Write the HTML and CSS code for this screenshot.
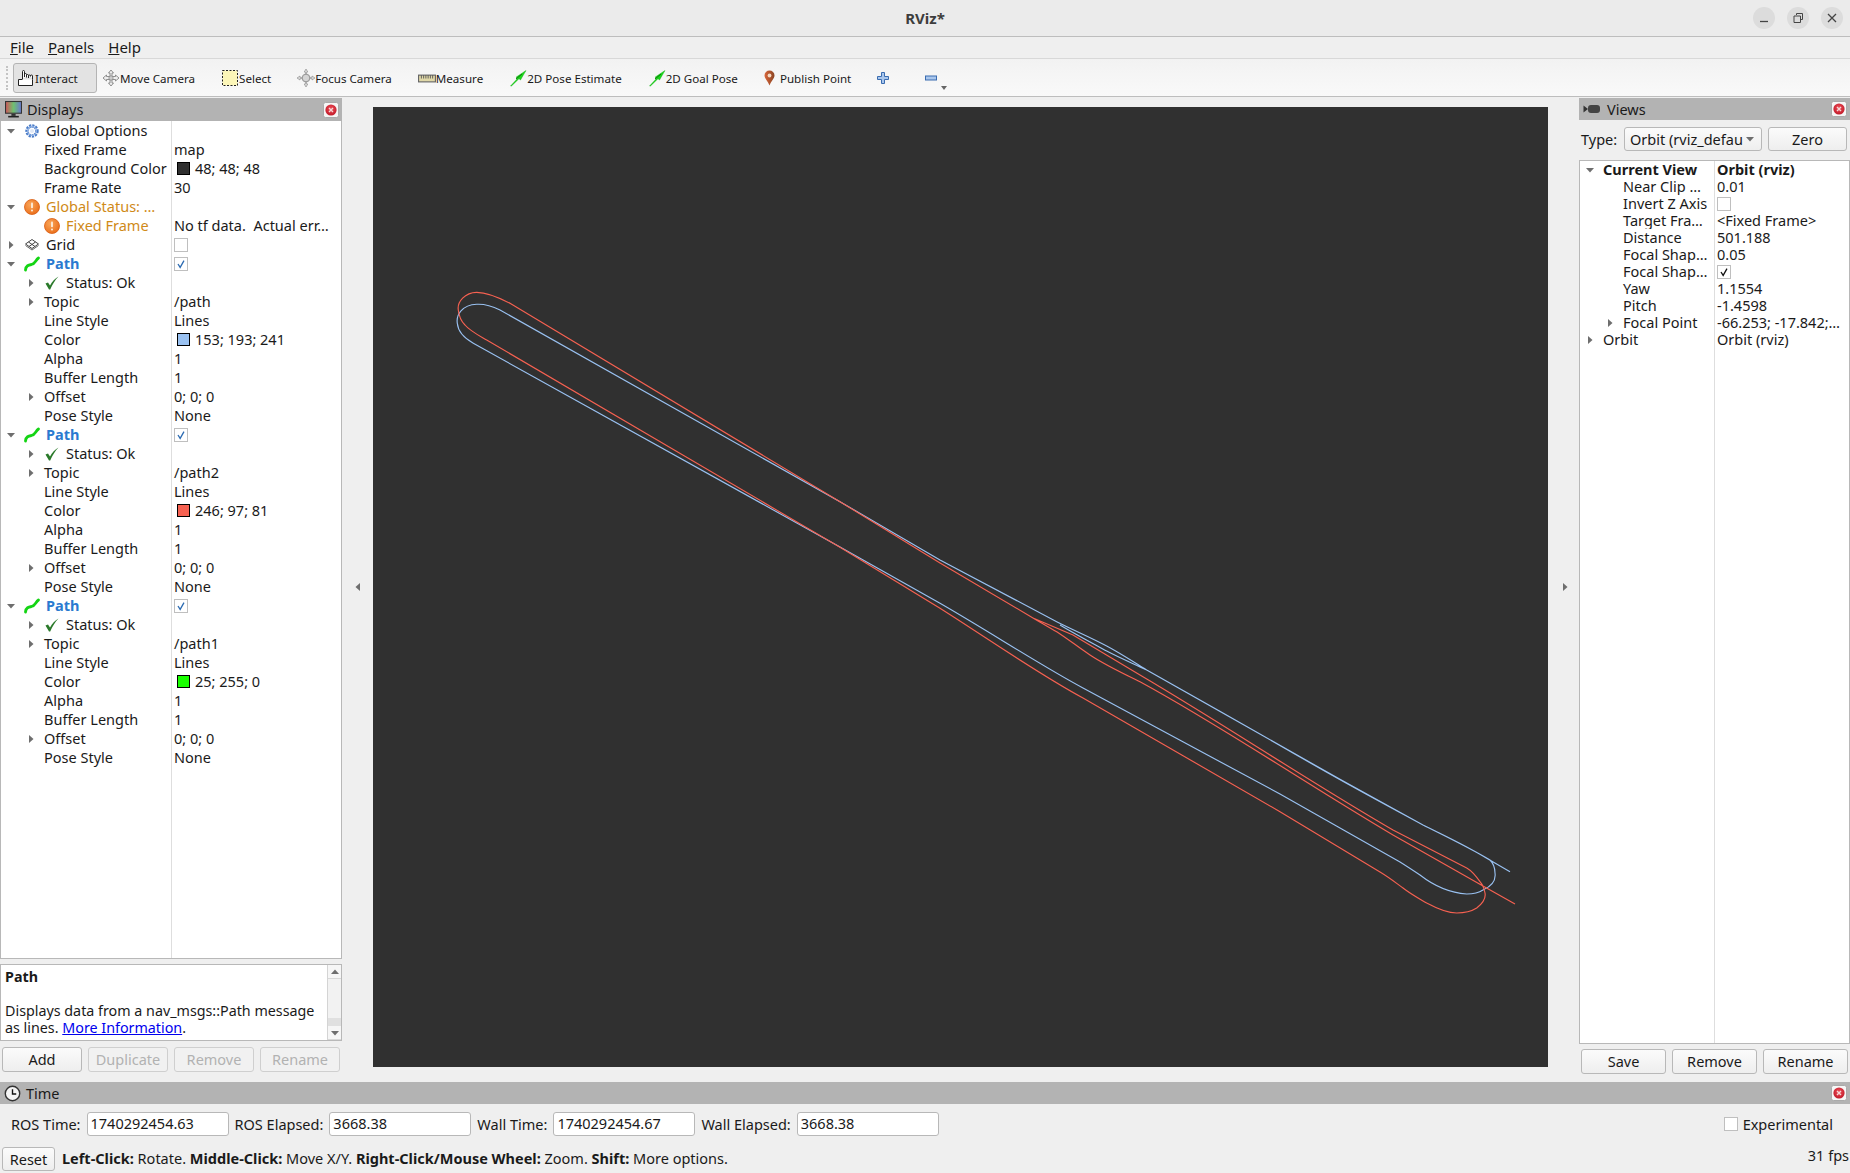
FILE: index.html
```html
<!DOCTYPE html>
<html lang="en">
<head>
<meta charset="utf-8">
<title>RViz*</title>
<link rel="stylesheet" href="styles.css">
</head>
<body>
<svg class="sprite" aria-hidden="true">
  <defs>
    <linearGradient id="rainbow" x1="0" x2="1" y1="0" y2="0"><stop offset="0" stop-color="#d0555a"/><stop offset=".5" stop-color="#6fc070"/><stop offset="1" stop-color="#6a78d0"/></linearGradient>
    <radialGradient id="org" cx=".4" cy=".35" r=".8"><stop offset="0" stop-color="#f9a65a"/><stop offset="1" stop-color="#e8650f"/></radialGradient>
    <radialGradient id="redg" cx=".5" cy=".4" r=".7"><stop offset="0" stop-color="#f0505a"/><stop offset="1" stop-color="#b81020"/></radialGradient>
    <linearGradient id="pin" x1="0" x2="1" y1="0" y2="0"><stop offset="0" stop-color="#d8663a"/><stop offset="1" stop-color="#8a4422"/></linearGradient>
    <symbol id="i-monitor" viewBox="0 0 16 16"><rect x=".5" y=".5" width="15" height="11" fill="url(#rainbow)" stroke="#333"/><rect x="6" y="12" width="4" height="2" fill="#333"/><rect x="3" y="14" width="10" height="1.5" fill="#222"/></symbol>
    <symbol id="i-close" viewBox="0 0 16 16"><rect x=".5" y=".5" width="15" height="15" rx="2" fill="#f6f6f6" stroke="#aaa"/><circle cx="8" cy="8" r="5.6" fill="url(#redg)"/><path d="M6 6l4 4M10 6l-4 4" stroke="#f6d6d6" stroke-width="1.4"/></symbol>
    <symbol id="i-gear" viewBox="0 0 16 16"><circle cx="8" cy="8" r="5" fill="none" stroke="#4a7cc8" stroke-width="3.4" stroke-dasharray="2 .9"/><circle cx="8" cy="8" r="4.4" fill="none" stroke="#8fb0e4" stroke-width="1.2"/><circle cx="8" cy="8" r="2" fill="#dfe8f6"/></symbol>
    <symbol id="i-warn" viewBox="0 0 16 16"><circle cx="8" cy="8" r="7.5" fill="url(#org)" stroke="#d85c10" stroke-width=".8"/><rect x="7" y="3.4" width="2" height="5.8" rx=".8" fill="#fbe7d2"/><rect x="7" y="10.5" width="2" height="2" rx=".8" fill="#fbe7d2"/></symbol>
    <symbol id="i-grid" viewBox="0 0 16 16"><path d="M8 2.500L14.500 7 8 11.500 1.500 7zM4.500 5L11 9.500M11.500 5L5 9.500" fill="none" stroke="#444" stroke-width="1"/><path d="M1.500 8.500L8 13l6.500-4.500" fill="none" stroke="#666" stroke-width="1"/></symbol>
    <symbol id="i-path" viewBox="0 0 16 16"><path d="M1.500 14C2 9.500 4.500 9 7.500 8.500c4-.8 4-4.500 7-6.500" fill="none" stroke="#14d414" stroke-width="2.800" stroke-linecap="round"/></symbol>
    <symbol id="i-check" viewBox="0 0 16 16"><path d="M1.500 8.500l2.500-1 2 3C8 6.500 11 3.500 14.500 1.500 11 5 8.500 9.500 6.200 14.500H5z" fill="#2b7a2b"/></symbol>
    <symbol id="i-hand" viewBox="0 0 18 18"><path d="M5.500 10V2.500a1 1 0 0 1 2 0V8M7.500 8V5.500a1 1 0 0 1 2 0V8.500M9.500 6.500a1 1 0 0 1 2 0V9M11.500 7a1 1 0 0 1 2 0v.5M13.500 7a1 1 0 0 1 2 0v3.500M1.500 10.500h4M1.500 10.500v6h14v-6" fill="#fff" stroke="#222" stroke-width="1"/></symbol>
    <symbol id="i-move" viewBox="0 0 18 18"><path d="M9 1l2.500 3H10v3.500h3.500V6L17 9l-3.500 3v-1.500H10V14h1.500L9 17l-2.500-3H8v-3.500H4.500V12L1 9l3.500-3v1.500H8V4H6.500z" fill="#eee" stroke="#777" stroke-width=".8"/><circle cx="9" cy="9" r="2.200" fill="#ccc" stroke="#777" stroke-width=".6"/></symbol>
    <symbol id="i-select" viewBox="0 0 18 18"><rect x="1.500" y="1.500" width="15" height="15" fill="#fcf6b8" stroke="#222" stroke-dasharray="2 1.500"/></symbol>
    <symbol id="i-focus" viewBox="0 0 18 18"><path d="M9 0l1.800 3H9.600v2.200a4 4 0 0 1 3.200 3.200H15V7l3 2-3 2V9.600h-2.200a4 4 0 0 1-3.200 3.200V15h1.200L9 18l-1.800-3h1.200v-2.200a4 4 0 0 1-3.200-3.200H3V11L0 9l3-2v1.400h2.200a4 4 0 0 1 3.200-3.200V3H7.200z" fill="#ddd" stroke="#888" stroke-width=".6"/><circle cx="9" cy="9" r="3.800" fill="#d4d4d4" stroke="#888" stroke-width=".8"/></symbol>
    <symbol id="i-measure" viewBox="0 0 16 8"><rect x=".5" y="1" width="15" height="6" fill="#e0d8a8" stroke="#666"/><path d="M3 1v3M5 1v3M7 1v3M9 1v3M11 1v3M13 1v3" stroke="#555" stroke-width=".8"/></symbol>
    <symbol id="i-arrow" viewBox="0 0 18 18"><path d="M1.500 17L8.500 9.500 7 8.200 17 1.500 11.500 11 10 9.700 2.500 17z" fill="#18d818" stroke="#0fa80f" stroke-width=".4"/><path d="M7 10L13 5" stroke="#0a7a0a" stroke-width="1"/></symbol>
    <symbol id="i-pin" viewBox="0 0 11 16"><path d="M5.500 15.500C4 11 .5 8.500 .5 5.500a5 5 0 0 1 10 0c0 3-3.500 5.500-5 10z" fill="url(#pin)"/><circle cx="5.500" cy="5.500" r="1.900" fill="#f4d9c2"/></symbol>
    <symbol id="i-plus" viewBox="0 0 12 12"><path d="M4.500 .5h3v4h4v3h-4v4h-3v-4h-4v-3h4z" fill="#a9c6ec" stroke="#3a6cb0"/></symbol>
    <symbol id="i-minus" viewBox="0 0 12 12"><rect x=".5" y="4" width="11" height="4" fill="#a9c6ec" stroke="#3a6cb0"/></symbol>
    <symbol id="i-clock" viewBox="0 0 16 16"><circle cx="8" cy="8" r="6.800" fill="#f4f4f4" stroke="#333" stroke-width="1.300"/><path d="M8 4v4.500h3.500" fill="none" stroke="#111" stroke-width="1.300"/></symbol>
    <symbol id="i-camera" viewBox="0 0 18 12"><path d="M.5 2.500L5 6 .5 9.500z" fill="#333"/><rect x="5" y="2" width="12" height="8" rx="3" fill="#444"/></symbol>
    <symbol id="i-down" viewBox="0 0 10 10"><path d="M1 3h8L5 7.500z" fill="#6e6e6e"/></symbol>
    <symbol id="i-right" viewBox="0 0 10 10"><path d="M3 1v8l4.500-4z" fill="#6e6e6e"/></symbol>
    <symbol id="i-tick" viewBox="0 0 14 14"><path d="M3.500 7L6 11l4.500-8" fill="none" stroke="currentColor" stroke-width="1.500"/></symbol>
  </defs>
</svg>

<header class="titlebar">
  <span class="title">RViz*</span>
  <div class="winbtns">
    <span class="winbtn"><svg class="wi" viewBox="0 0 12 12"><path d="M2 9.500h8" stroke="#444" stroke-width="1.300"/></svg></span>
    <span class="winbtn"><svg class="wi" viewBox="0 0 12 12"><path d="M4.500 3V1.500h6v6H9M2 4h6.500v6.500H2z" fill="none" stroke="#444" stroke-width="1"/></svg></span>
    <span class="winbtn"><svg class="wi" viewBox="0 0 12 12"><path d="M2 2l8 8M10 2l-8 8" stroke="#444" stroke-width="1.300"/></svg></span>
  </div>
</header>

<nav class="menubar">
  <span><u>F</u>ile</span>
  <span><u>P</u>anels</span>
  <span><u>H</u>elp</span>
</nav>

<div class="toolbar">
  <span class="grip"></span>
  <div class="tool active"><svg class="ti"><use href="#i-hand"/></svg><span>Interact</span></div>
  <div class="tool"><svg class="ti"><use href="#i-move"/></svg><span>Move Camera</span></div>
  <div class="tool"><svg class="ti"><use href="#i-select"/></svg><span>Select</span></div>
  <div class="tool"><svg class="ti"><use href="#i-focus"/></svg><span>Focus Camera</span></div>
  <div class="tool"><svg class="ti ti-m"><use href="#i-measure"/></svg><span>Measure</span></div>
  <div class="tool"><svg class="ti"><use href="#i-arrow"/></svg><span>2D Pose Estimate</span></div>
  <div class="tool"><svg class="ti"><use href="#i-arrow"/></svg><span>2D Goal Pose</span></div>
  <div class="tool tool-pin"><svg class="ti-p"><use href="#i-pin"/></svg><span>Publish Point</span></div>
  <div class="tool tool-plus"><svg class="ti-s"><use href="#i-plus"/></svg></div>
  <div class="tool tool-minus"><svg class="ti-s"><use href="#i-minus"/></svg><span class="drop"></span></div>
</div>

<main class="main">
  <section class="dock dock-left">
    <div class="docktitle"><svg class="dti"><use href="#i-monitor"/></svg><span>Displays</span><svg class="dclose"><use href="#i-close"/></svg></div>
    <div class="tree tree-l">
      <div class="row"><span class="name d0"><svg class="ar"><use href="#i-down"/></svg><svg class="ico"><use href="#i-gear"/></svg>Global Options</span><span class="val"></span></div>
      <div class="row"><span class="name d1"><i class="ar"></i><span class="lb">Fixed Frame</span></span><span class="val">map</span></div>
      <div class="row"><span class="name d1"><i class="ar"></i><span class="lb">Background Color</span></span><span class="val"><i class="sw sw-bg"></i>48; 48; 48</span></div>
      <div class="row"><span class="name d1"><i class="ar"></i><span class="lb">Frame Rate</span></span><span class="val">30</span></div>
      <div class="row warn"><span class="name d0"><svg class="ar"><use href="#i-down"/></svg><svg class="ico"><use href="#i-warn"/></svg>Global Status: …</span><span class="val"></span></div>
      <div class="row"><span class="name d1 warn"><i class="ar"></i><svg class="ico"><use href="#i-warn"/></svg>Fixed Frame</span><span class="val">No tf data.&nbsp; Actual err…</span></div>
      <div class="row"><span class="name d0"><svg class="ar"><use href="#i-right"/></svg><svg class="ico"><use href="#i-grid"/></svg>Grid</span><span class="val"><i class="cb"></i></span></div>

      <div class="row"><span class="name d0 blue"><svg class="ar"><use href="#i-down"/></svg><svg class="ico"><use href="#i-path"/></svg>Path</span><span class="val"><i class="cb cb-blue"><svg class="tk"><use href="#i-tick"/></svg></i></span></div>
      <div class="row"><span class="name d1"><svg class="ar"><use href="#i-right"/></svg><svg class="ico"><use href="#i-check"/></svg>Status: Ok</span><span class="val"></span></div>
      <div class="row"><span class="name d1"><svg class="ar"><use href="#i-right"/></svg><span class="lb">Topic</span></span><span class="val">/path</span></div>
      <div class="row"><span class="name d1"><i class="ar"></i><span class="lb">Line Style</span></span><span class="val">Lines</span></div>
      <div class="row"><span class="name d1"><i class="ar"></i><span class="lb">Color</span></span><span class="val"><i class="sw sw-a"></i>153; 193; 241</span></div>
      <div class="row"><span class="name d1"><i class="ar"></i><span class="lb">Alpha</span></span><span class="val">1</span></div>
      <div class="row"><span class="name d1"><i class="ar"></i><span class="lb">Buffer Length</span></span><span class="val">1</span></div>
      <div class="row"><span class="name d1"><svg class="ar"><use href="#i-right"/></svg><span class="lb">Offset</span></span><span class="val">0; 0; 0</span></div>
      <div class="row"><span class="name d1"><i class="ar"></i><span class="lb">Pose Style</span></span><span class="val">None</span></div>

      <div class="row"><span class="name d0 blue"><svg class="ar"><use href="#i-down"/></svg><svg class="ico"><use href="#i-path"/></svg>Path</span><span class="val"><i class="cb cb-blue"><svg class="tk"><use href="#i-tick"/></svg></i></span></div>
      <div class="row"><span class="name d1"><svg class="ar"><use href="#i-right"/></svg><svg class="ico"><use href="#i-check"/></svg>Status: Ok</span><span class="val"></span></div>
      <div class="row"><span class="name d1"><svg class="ar"><use href="#i-right"/></svg><span class="lb">Topic</span></span><span class="val">/path2</span></div>
      <div class="row"><span class="name d1"><i class="ar"></i><span class="lb">Line Style</span></span><span class="val">Lines</span></div>
      <div class="row"><span class="name d1"><i class="ar"></i><span class="lb">Color</span></span><span class="val"><i class="sw sw-b"></i>246; 97; 81</span></div>
      <div class="row"><span class="name d1"><i class="ar"></i><span class="lb">Alpha</span></span><span class="val">1</span></div>
      <div class="row"><span class="name d1"><i class="ar"></i><span class="lb">Buffer Length</span></span><span class="val">1</span></div>
      <div class="row"><span class="name d1"><svg class="ar"><use href="#i-right"/></svg><span class="lb">Offset</span></span><span class="val">0; 0; 0</span></div>
      <div class="row"><span class="name d1"><i class="ar"></i><span class="lb">Pose Style</span></span><span class="val">None</span></div>

      <div class="row"><span class="name d0 blue"><svg class="ar"><use href="#i-down"/></svg><svg class="ico"><use href="#i-path"/></svg>Path</span><span class="val"><i class="cb cb-blue"><svg class="tk"><use href="#i-tick"/></svg></i></span></div>
      <div class="row"><span class="name d1"><svg class="ar"><use href="#i-right"/></svg><svg class="ico"><use href="#i-check"/></svg>Status: Ok</span><span class="val"></span></div>
      <div class="row"><span class="name d1"><svg class="ar"><use href="#i-right"/></svg><span class="lb">Topic</span></span><span class="val">/path1</span></div>
      <div class="row"><span class="name d1"><i class="ar"></i><span class="lb">Line Style</span></span><span class="val">Lines</span></div>
      <div class="row"><span class="name d1"><i class="ar"></i><span class="lb">Color</span></span><span class="val"><i class="sw sw-c"></i>25; 255; 0</span></div>
      <div class="row"><span class="name d1"><i class="ar"></i><span class="lb">Alpha</span></span><span class="val">1</span></div>
      <div class="row"><span class="name d1"><i class="ar"></i><span class="lb">Buffer Length</span></span><span class="val">1</span></div>
      <div class="row"><span class="name d1"><svg class="ar"><use href="#i-right"/></svg><span class="lb">Offset</span></span><span class="val">0; 0; 0</span></div>
      <div class="row"><span class="name d1"><i class="ar"></i><span class="lb">Pose Style</span></span><span class="val">None</span></div>
      <div class="filler"><span class="name"></span><span class="val"></span></div>
    </div>
    <div class="vsplit"></div>
    <div class="desc">
      <div class="desctext">
        <b>Path</b>
        <p>Displays data from a nav_msgs::Path message<br>as lines. <a href="#more">More Information</a>.</p>
      </div>
      <div class="scroll">
        <span class="sbtn"><svg class="sa"><use href="#i-down"/></svg></span>
        <span class="strack"><i class="sthumb"></i></span>
        <span class="sbtn"><svg class="sb"><use href="#i-down"/></svg></span>
      </div>
    </div>
    <div class="btnrow btnrow-l">
      <button class="btn">Add</button>
      <button class="btn" disabled>Duplicate</button>
      <button class="btn" disabled>Remove</button>
      <button class="btn" disabled>Rename</button>
    </div>
  </section>

  <div class="center">
    <div class="handle"><svg class="ha ha-l"><use href="#i-right"/></svg></div>
    <div class="view">
      <svg class="paths" viewBox="373 107 1175 960">
        <path class="p-blue" d="M1510 871.700 L1486.700 858.300 C1465 845 1445 836 1423 825 L1340 779.300 L1146.700 670 C1132 661 1120 653 1106.700 646 C1090 637 1075 631 1056.700 621.700 L940 560 L840 501.700 L500 310 C488 304 482 304 476.700 304.300 C462 305 456 315 457.300 323.300 C458 332 464 338 473.300 343.300 L840 547 L940 603.300 C990 632 1040 665 1083 688 L1280 794 L1400 862 C1408 867 1414 871 1420 875 C1436.700 888 1452 893 1466.700 894 C1474 894 1480 892 1483 890 C1492 886 1496 880 1495 873 C1495 867 1493 863 1490 860 C1470 848 1445 836 1423 825 C1390 807 1350 786 1300 757 C1250 728 1200 700 1146.700 670 C1132 663 1120 658 1106.700 651 C1090 642 1075 634 1060 625"/>
        <path class="p-red" d="M1515 904 L1483 886 L1393 835 C1300 780 1220 725 1140 681.700 C1120 672 1105 665 1090 655 C1078 647 1068 639 1056.700 631.700 C1050 628 1040 622 1033 618 L940 563 L840 501.700 L510 303.300 C498 297 486 292.300 476.700 292.300 C465 292.300 457 302 458.300 310 C459 317 461 321 465 325 C470 331 478 335 486.700 340 L840 547.300 L940 608.300 C990 640 1040 675 1083 698 L1280 811.700 L1380 872 C1390 878 1396 883 1403 888 C1412 895 1420 899 1426.700 903 C1436 908 1447 913 1456.700 913 C1466 913 1472 911 1476.700 908 C1483 903 1486 898 1485 893 C1484 888 1482 884 1480 881.700 C1476 876 1472 871 1466.700 868 L1393 830 C1310 782 1225 725 1140 675 L1073 635 L1033 618"/>
      </svg>
    </div>
    <div class="handle handle-r"><svg class="ha ha-r"><use href="#i-right"/></svg></div>
  </div>

  <section class="dock dock-right">
    <div class="docktitle docktitle-r"><svg class="dti-c"><use href="#i-camera"/></svg><span>Views</span><svg class="dclose"><use href="#i-close"/></svg></div>
    <div class="typerow">
      <span class="typelb">Type:</span>
      <div class="combo"><span class="combotext">Orbit (rviz_defau</span><svg class="ci"><use href="#i-down"/></svg></div>
      <button class="btn btn-zero">Zero</button>
    </div>
    <div class="tree tree-r">
      <div class="row strong"><span class="name d0"><svg class="ar"><use href="#i-down"/></svg><span class="lb">Current View</span></span><span class="val">Orbit (rviz)</span></div>
      <div class="row"><span class="name d1"><i class="ar"></i><span class="lb">Near Clip …</span></span><span class="val">0.01</span></div>
      <div class="row"><span class="name d1"><i class="ar"></i><span class="lb">Invert Z Axis</span></span><span class="val"><i class="cb"></i></span></div>
      <div class="row"><span class="name d1"><i class="ar"></i><span class="lb">Target Fra…</span></span><span class="val">&lt;Fixed Frame&gt;</span></div>
      <div class="row"><span class="name d1"><i class="ar"></i><span class="lb">Distance</span></span><span class="val">501.188</span></div>
      <div class="row"><span class="name d1"><i class="ar"></i><span class="lb">Focal Shap…</span></span><span class="val">0.05</span></div>
      <div class="row"><span class="name d1"><i class="ar"></i><span class="lb">Focal Shap…</span></span><span class="val"><i class="cb cb-black"><svg class="tk"><use href="#i-tick"/></svg></i></span></div>
      <div class="row"><span class="name d1"><i class="ar"></i><span class="lb">Yaw</span></span><span class="val">1.1554</span></div>
      <div class="row"><span class="name d1"><i class="ar"></i><span class="lb">Pitch</span></span><span class="val">-1.4598</span></div>
      <div class="row"><span class="name d1"><svg class="ar"><use href="#i-right"/></svg><span class="lb">Focal Point</span></span><span class="val">-66.253; -17.842;…</span></div>
      <div class="row"><span class="name d0"><svg class="ar"><use href="#i-right"/></svg><span class="lb">Orbit</span></span><span class="val">Orbit (rviz)</span></div>
      <div class="filler"><span class="name"></span><span class="val"></span></div>
    </div>
    <div class="btnrow btnrow-r">
      <button class="btn">Save</button>
      <button class="btn">Remove</button>
      <button class="btn">Rename</button>
    </div>
  </section>
</main>

<section class="timepanel">
  <div class="docktitle docktitle-t"><svg class="dti"><use href="#i-clock"/></svg><span>Time</span><svg class="dclose"><use href="#i-close"/></svg></div>
  <div class="timerow">
    <label>ROS Time:</label><span class="field">1740292454.63</span>
    <label>ROS Elapsed:</label><span class="field">3668.38</span>
    <label>Wall Time:</label><span class="field">1740292454.67</span>
    <label>Wall Elapsed:</label><span class="field">3668.38</span>
    <span class="exp"><i class="cb cb-exp"></i>Experimental</span>
  </div>
</section>

<footer class="statusbar">
  <button class="btn btn-reset">Reset</button>
  <span class="hint"><b>Left-Click:</b> Rotate. <b>Middle-Click:</b> Move X/Y. <b>Right-Click/Mouse Wheel:</b> Zoom. <b>Shift:</b> More options.</span>
  <span class="fps">31 fps</span>
</footer>
</body>
</html>
```

FILE: styles.css
```css
* { box-sizing: border-box; }
html, body { margin: 0; padding: 0; }
body {
  width: 1850px; height: 1173px; overflow: hidden;
  display: flex; flex-direction: column;
  background: #efefef; color: #1a1a1a;
  font-family: "Noto Sans", "Liberation Sans", sans-serif;
  font-size: 14.5px; line-height: 17px;
}
.sprite { width: 0; height: 0; display: block; }

.titlebar {
  height: 37px; flex: none; background: #ebebeb; border-bottom: 1px solid #bdbdbd;
  display: flex; align-items: center; justify-content: center; position: relative;
}
.title { font-weight: 700; font-size: 15px; color: #3d3d3d; }
.winbtns { position: absolute; right: 7px; top: 7px; display: flex; gap: 12px; }
.winbtn { width: 22px; height: 22px; border-radius: 50%; background: #dcdcdc; display: flex; align-items: center; justify-content: center; }
.wi { width: 12px; height: 12px; }

.menubar {
  height: 22px; flex: none; background: #efefef; border-bottom: 1px solid #d8d8d8;
  display: flex; gap: 14px; padding-left: 10px; align-items: center;
  font-size: 15px; padding-bottom: 1px;
}

.toolbar {
  height: 38px; flex: none; display: flex; align-items: center; gap: 0;
  background: linear-gradient(#f2f2f2, #f9f9f9); border-bottom: 1px solid #bdbdbd;
  font-size: 11.6px; padding: 1px 0 0 6px;
}
.grip { width: 3px; height: 24px; margin-right: 4px; border-left: 2px dotted #c4c4c4; }
.tool { display: flex; align-items: center; height: 30px; padding-right: 26px; position: relative; }
.tool.active {
  width: 84px; padding: 0 0 0 3px; margin-right: 5px;
  background: #e3e3e3; border: 1px solid #b4b4b4; border-radius: 3px;
}
.ti { width: 18px; height: 18px; margin-right: 0; flex: none; }
.ti-m { height: 9px; }
.ti-p { width: 11px; height: 16px; margin-right: 5px; flex: none; }
.ti-s { width: 12px; height: 12px; display: block; }
.tool-plus { padding-right: 36px; }
.tool-minus { padding-right: 0; }
.drop { position: absolute; left: 16px; top: 23px; border: 3px solid transparent; border-top: 4px solid #666; }

.main { height: 985px; flex: none; display: flex; padding-top: 1px; }
.dock { display: flex; flex-direction: column; flex: none; }
.dock-left { width: 342px; }
.dock-right { width: 271px; }
.docktitle {
  height: 23px; flex: none; background: #b3b3b3; display: flex; align-items: center;
  padding-left: 5px;
}
.docktitle-r { height: 22px; padding-left: 4px; }
.docktitle-t { height: 22px; padding-left: 4px; }
.dti { width: 17px; height: 17px; margin-right: 5px; flex: none; }
.dti-c { width: 18px; height: 12px; margin-right: 6px; flex: none; }
.dclose { width: 16px; height: 16px; margin-left: auto; margin-right: 3px; flex: none; }

.tree { background: #fff; border: 1px solid #b8b8b8; display: flex; flex-direction: column; overflow: hidden; }
.tree-l { height: 838px; flex: none; border-top: 0; --nw: 170px; --rh: 19px; }
.tree-r { height: 884px; flex: none; --nw: 134px; --rh: 17px; }
.row { display: flex; height: var(--rh); flex: none; white-space: nowrap; }
.name { display: flex; align-items: center; overflow: hidden; border-right: 1px solid #dedede; flex: none; }
.val { flex: 1; display: flex; align-items: center; padding-left: 2px; overflow: hidden; }
.filler { flex: 1; display: flex; }
.d0 { padding-left: 3px; }
.d1 { padding-left: 23px; }
.tree .name { width: calc(var(--nw) + 1px); }
.ar { width: 16px; height: 10px; flex: none; display: block; margin: 0 1px 0 -1px; }
.ico { width: 16px; height: 16px; margin: 0 6px 0 4px; flex: none; }
.lb { margin-left: 4px; }
.warn { color: #d08a18; }
.row.warn .val { color: #1a1a1a; }
.blue { color: #2a7ad0; font-weight: 700; }
.strong { font-weight: 700; }
.sw { width: 13px; height: 13px; border: 1px solid #000; margin: 0 5px 0 3px; flex: none; }
.sw-bg { background: #303030; }
.sw-a { background: #99c1f1; }
.sw-b { background: #f66151; }
.sw-c { background: #19ff00; }
.cb { width: 14px; height: 14px; border: 1px solid #bfbfbf; background: #fff; display: block; flex: none; }
.cb-blue { color: #2c6bb2; }
.cb-black { color: #111; }
.tk { width: 12px; height: 12px; display: block; }

.vsplit { height: 5px; flex: none; }
.desc { height: 77px; flex: none; background: #fff; border: 1px solid #b8b8b8; display: flex; font-size: 14.3px; }
.desctext { flex: 1; padding: 3px 0 0 4px; }
.desctext b { display: block; }
.desctext p { margin: 17px 0 0; }
.desctext a { color: #0000ee; text-decoration: underline; }
.scroll { width: 14px; flex: none; display: flex; flex-direction: column; border-left: 1px solid #d4d4d4; background: #f2f2f2; }
.sbtn { height: 14px; flex: none; display: flex; align-items: center; justify-content: center; background: #f6f6f6; border-bottom: 1px solid #d8d8d8; }
.sa { width: 10px; height: 10px; transform: rotate(180deg); }
.sb { width: 10px; height: 10px; }
.strack { flex: 1; display: flex; flex-direction: column; justify-content: flex-end; }
.sthumb { height: 8px; background: #e0e0e0; display: block; }

.btn {
  height: 25px; font: inherit; color: #1a1a1a; padding: 0;
  background: linear-gradient(#fbfbfb, #eeeeee);
  border: 1px solid #b8b8b8; border-radius: 3px;
}
.btn:disabled { color: #b2b2b2; background: #f1f1f1; border-color: #cfcfcf; }
.btnrow { display: flex; flex: none; }
.btnrow-l { gap: 6px; padding: 6px 0 0 2px; }
.btnrow-l .btn { width: 80px; }
.btnrow-r { gap: 6px; padding: 5px 0 0 2px; }
.btnrow-r .btn { width: 85px; }

.center { flex: 1; display: flex; padding: 9px 0 15px; }
.handle { width: 31px; flex: none; display: flex; align-items: center; justify-content: center; }
.handle-r { width: 31px; padding: 0 0 0 2px; }
.ha { width: 10px; height: 10px; }
.ha-l { transform: rotate(180deg); }
.view { flex: 1; background: #303030; }
.paths { width: 100%; height: 100%; display: block; }
.paths path { fill: none; stroke-width: 1.15; }
.p-blue { stroke: #99c1f1; }
.p-red { stroke: #f66151; }

.typerow { display: flex; align-items: flex-start; height: 40px; flex: none; padding: 7px 3px 0 2px; }
.typelb { width: 43px; flex: none; line-height: 24px; }
.combo {
  width: 138px; height: 24px; flex: none; display: flex; align-items: center; padding: 0 6px 0 5px;
  background: linear-gradient(#fbfbfb, #eeeeee); border: 1px solid #b8b8b8; border-radius: 3px; margin-right: 6px;
}
.combotext { flex: 1; overflow: hidden; white-space: nowrap; }
.ci { width: 10px; height: 10px; flex: none; margin-left: 2px; }
.btn-zero { width: 79px; height: 24px; }

.timepanel { flex: none; }
.timerow { display: flex; align-items: center; height: 43px; padding: 8px 17px 11px 11px; }
.timerow label { margin-right: 6px; white-space: nowrap; }
.field { width: 142px; height: 24px; flex: none; background: #fff; border: 1px solid #b8b8b8; border-radius: 3px; padding: 2px 3px; margin-right: 6px; }
.exp { margin-left: auto; display: flex; align-items: center; }
.cb-exp { margin-right: 5px; }

.statusbar { flex: 1; display: flex; align-items: flex-start; padding-left: 2px; position: relative; }
.btn-reset { width: 53px; height: 24px; margin-right: 7px; }
.hint { padding-top: 3px; }
.fps { margin-left: auto; padding-right: 1px; }
```
